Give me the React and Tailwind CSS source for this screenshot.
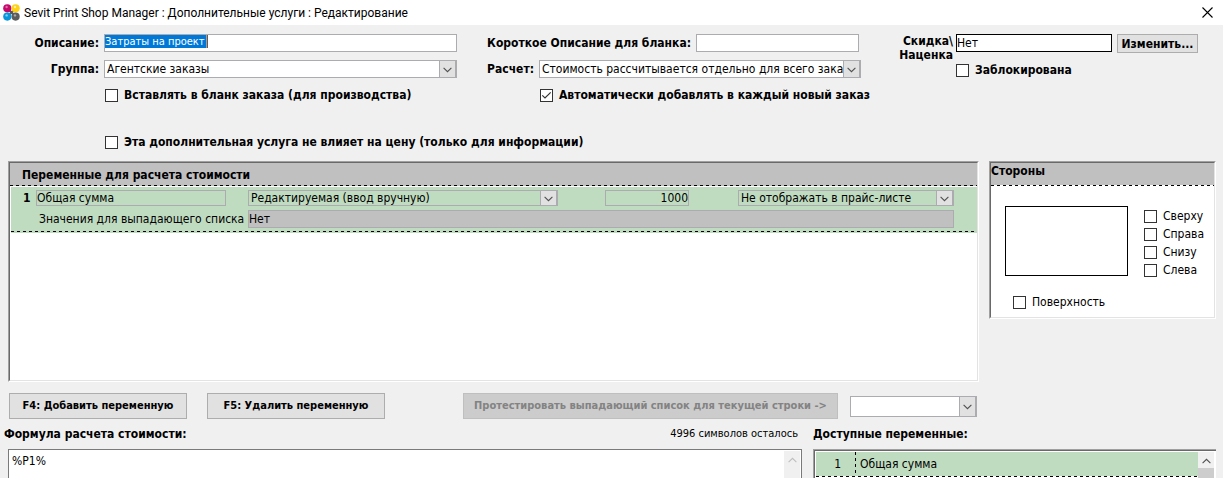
import { useEffect, useRef } from 'react'

const dashed = 'h-px shrink-0 bg-[repeating-linear-gradient(90deg,#000_0_3px,transparent_3px_6px)]'
const sunken = 'border border-t-[#a0a0a0] border-l-[#a0a0a0] border-r-white border-b-white'
const sunkenInner = 'border border-t-[#696969] border-l-[#696969] border-r-[#e3e3e3] border-b-[#e3e3e3]'

function Chevron({ className }) {
  return (
    <svg viewBox="0 0 9 6" className={className} fill="none" stroke="currentColor" strokeWidth="1.1" aria-hidden="true">
      <path d="M0.6 0.8 L4.5 4.7 L8.4 0.8" />
    </svg>
  )
}

function Select({ id, label, value, className = '' }) {
  return (
    <div className={`relative min-w-0 border border-[#ababb0] ${className}`}>
      <select id={id} aria-label={label} className="block h-full w-full appearance-none bg-transparent pl-[2px] pr-[17px] leading-[14px] outline-none">
        <option>{value}</option>
      </select>
      <span className="pointer-events-none absolute inset-y-0 right-0 flex w-[17px] items-center justify-center border border-y-0 border-[#ababb0] bg-[#e1e1e1] pt-[2px] text-[#505050]">
        <Chevron className="h-[6px] w-[9px]" />
      </span>
    </div>
  )
}

function Checkbox({ label, checked = false, bold = true, className = '' }) {
  return (
    <label className={`flex items-center gap-[6px] ${bold ? 'font-bold' : ''} ${className}`}>
      <span className="relative flex size-[13px] shrink-0">
        <input type="checkbox" defaultChecked={checked} className="peer size-[13px] appearance-none border border-[#333] bg-white" />
        <svg viewBox="0 0 13 13" className="pointer-events-none absolute inset-0 hidden peer-checked:block" fill="none" stroke="#333" strokeWidth="1.2" aria-hidden="true">
          <path d="M2.3 6.3 L5 9 L10.7 3.3" />
        </svg>
      </span>
      <span className="whitespace-nowrap">{label}</span>
    </label>
  )
}

function Logo() {
  return (
    <svg viewBox="0 0 17 17" className="size-[17px]" aria-hidden="true">
      <path d="M4 4 L13 13 M13 4 L4 13" stroke="#555" strokeWidth="2" />
      <circle cx="4.3" cy="4.3" r="4.1" fill="#c4086c" />
      <circle cx="12.6" cy="4.3" r="4.1" fill="#fcd116" />
      <circle cx="4.3" cy="12.6" r="4.1" fill="#0a94dc" />
      <circle cx="12.6" cy="12.6" r="4.1" fill="#5c5c5c" />
      <circle cx="3.6" cy="3" r="1.2" fill="#e36ba8" />
      <circle cx="12" cy="3" r="1.2" fill="#fff0a0" />
      <circle cx="3.6" cy="11.4" r="1.2" fill="#7fd0f5" />
      <circle cx="12" cy="11.4" r="1.2" fill="#a8a8a8" />
    </svg>
  )
}

function TitleBar() {
  return (
    <header className="flex h-[25px] shrink-0 items-center justify-between bg-white pl-[3px] pr-[10px]">
      <div className="flex items-center gap-1">
        <Logo />
        <h1 className="font-['Roboto','Noto_Sans',sans-serif] text-[12px] leading-4">
          Sevit Print Shop Manager : Дополнительные услуги : Редактирование
        </h1>
      </div>
      <button type="button" aria-label="Закрыть">
        <svg viewBox="0 0 11 11" className="size-[11px]" stroke="#000" strokeWidth="1.1" aria-hidden="true">
          <path d="M0.5 0.5 L10.5 10.5 M10.5 0.5 L0.5 10.5" />
        </svg>
      </button>
    </header>
  )
}

function Form() {
  const nameRef = useRef(null)

  useEffect(() => {
    nameRef.current.focus()
    nameRef.current.select()
  }, [])

  return (
    <section className="grid h-[136px] shrink-0 grid-cols-[457fr_404fr_362fr] pt-[9px]">
      <div className="min-w-0">
        <div className="flex h-[18px] items-center gap-[5px]">
          <label htmlFor="name" className="w-[99px] shrink-0 text-right font-bold">Описание:</label>
          <div className="relative h-[18px] min-w-0 flex-1 border border-[#ababb0] bg-white">
            <input
              id="name"
              ref={nameRef}
              defaultValue="Затраты на проект "
              className="block h-[13px] w-full text-[11px] leading-[13px] caret-transparent outline-none selection:bg-[#0078d7] selection:text-white"
            />
            <span className="absolute left-[101px] top-0 h-[13px] w-px bg-[#ff8728]" />
          </div>
        </div>
        <div className="mt-2 flex items-center gap-[5px]">
          <label htmlFor="group" className="w-[99px] shrink-0 text-right font-bold">Группа:</label>
          <Select id="group" value="Агентские заказы" className="h-[18px] flex-1 bg-white" />
        </div>
        <Checkbox label="Вставлять в бланк заказа (для производства)" className="ml-[105px] mt-[9px]" />
        <Checkbox label="Эта дополнительная услуга не влияет на цену (только для информации)" className="ml-[105px] mt-[31px]" />
      </div>

      <div className="min-w-0">
        <div className="flex h-[18px] items-center gap-[5px] pr-[2px]">
          <label htmlFor="short" className="w-[234px] shrink-0 text-right font-bold">Короткое Описание для бланка:</label>
          <input id="short" className="h-[18px] min-w-0 flex-1 border border-[#ababb0] bg-white px-[2px] outline-none" />
        </div>
        <div className="mt-2 flex items-center gap-[5px]">
          <label htmlFor="calc" className="w-[77px] shrink-0 text-right font-bold">Расчет:</label>
          <Select id="calc" value="Стоимость рассчитывается отдельно для всего заказа" className="h-[18px] flex-1 bg-white" />
        </div>
        <Checkbox checked label="Автоматически добавлять в каждый новый заказ" className="ml-[83px] mt-[9px]" />
      </div>

      <div className="flex min-w-0 gap-[3px] pr-[25px]">
        <label htmlFor="discount" className="w-[92px] shrink-0 text-right font-bold leading-[14px]">
          Скидка\<br />Наценка
        </label>
        <div className="min-w-0 flex-1">
          <div className="flex gap-[5px]">
            <input id="discount" defaultValue="Нет" className="h-[18px] min-w-0 flex-1 border border-black bg-white outline-none" />
            <button type="button" className="h-[19px] w-[81px] border border-[#adadad] bg-[#e1e1e1] font-bold leading-4">Изменить...</button>
          </div>
          <Checkbox label="Заблокирована" className="mt-[9px]" />
        </div>
      </div>
    </section>
  )
}

function Variables() {
  return (
    <section className={`h-[221px] min-w-0 ${sunken}`}>
      <div className={`h-full bg-white ${sunkenInner}`}>
        <h2 className="h-[22px] bg-[#c0c0c0] pl-3 font-bold leading-[24px]">Переменные для расчета стоимости</h2>
        <div className={`bg-[#c0c0c0] ${dashed}`} />
        <div className="ml-px mt-px bg-[#c0dcc0]">
          <div className="grid grid-cols-[25fr_190fr_22fr_310fr_47fr_84fr_49fr_216fr_23fr] items-center gap-y-1 pb-[3px] pt-[3px]">
            <span className="pl-3 font-bold">1</span>
            <input aria-label="Название" defaultValue="Общая сумма" className="h-4 min-w-0 border border-[#ababb0] bg-transparent outline-none" />
            <Select label="Тип" value="Редактируемая (ввод вручную)" className="col-start-4 h-4" />
            <input aria-label="Значение" defaultValue="1000" className="col-start-6 h-4 min-w-0 border border-[#ababb0] bg-transparent text-right outline-none" />
            <Select label="Прайс-лист" value="Не отображать в прайс-листе" className="col-start-8 h-4" />
            <label htmlFor="values" className="col-span-3 whitespace-nowrap pl-7">Значения для выпадающего списка</label>
            <input id="values" defaultValue="Нет" className="col-span-5 h-[18px] min-w-0 border border-[#ababb0] bg-[#c0c0c0] outline-none" />
          </div>
          <div className={dashed} />
          <div className="h-px" />
        </div>
      </div>
    </section>
  )
}

function Sides() {
  return (
    <section className={`h-[158px] min-w-0 ${sunken}`}>
      <div className={`h-full bg-white ${sunkenInner}`}>
        <h2 className="h-[22px] bg-[#c0c0c0] font-bold leading-4">Стороны</h2>
        <div className={dashed} />
        <div className="flex gap-4 pl-[14px] pt-5">
          <div className="h-[70px] w-[123px] shrink-0 border border-black" />
          <div className="flex flex-col gap-[2px] pt-[2px]">
            <Checkbox bold={false} label="Сверху" />
            <Checkbox bold={false} label="Справа" />
            <Checkbox bold={false} label="Снизу" />
            <Checkbox bold={false} label="Слева" />
          </div>
        </div>
        <Checkbox bold={false} label="Поверхность" className="ml-[22px] mt-4" />
      </div>
    </section>
  )
}

function Actions() {
  return (
    <div className="mt-[11px] flex shrink-0 items-center pl-[9px] pr-[246px]">
      <button type="button" className="h-[26px] w-[178px] shrink-0 border border-[#adadad] bg-[#e1e1e1] text-[11px] font-bold">F4: Добавить переменную</button>
      <button type="button" className="ml-5 h-[26px] w-[178px] shrink-0 border border-[#adadad] bg-[#e1e1e1] text-[11px] font-bold">F5: Удалить переменную</button>
      <button type="button" disabled className="ml-auto h-[26px] w-[375px] shrink-0 whitespace-nowrap border border-[#bfbfbf] bg-[#ccc] text-[11px] font-bold text-[#838383]">
        Протестировать выпадающий список для текущей строки -&gt;
      </button>
      <Select label="Выпадающий список" value="" className="ml-3 h-[21px] w-[127px] shrink-0 bg-white" />
    </div>
  )
}

function Formula() {
  return (
    <section className="flex min-w-0 flex-col">
      <div className="flex h-[30px] items-center justify-between pl-1 pr-1">
        <label htmlFor="formula" className="font-bold">Формула расчета стоимости:</label>
        <span className="text-[11px]">4996 символов осталось</span>
      </div>
      <div className="ml-2 flex min-h-0 flex-1 border border-b-0 border-[#7a7a7a] bg-white p-px pb-0">
        <textarea id="formula" defaultValue="%P1%" className="min-w-0 flex-1 resize-none overflow-hidden pl-[2px] pt-[2px] outline-none" />
        <div className="flex w-4 justify-center bg-[#f0f0f0] pt-[6px] text-[#bfbfbf]">
          <Chevron className="h-[6px] w-[9px] rotate-180" />
        </div>
      </div>
    </section>
  )
}

function Available() {
  return (
    <section className="flex min-w-0 flex-col">
      <h2 className="flex h-[30px] items-center font-bold">Доступные переменные:</h2>
      <div className="flex min-h-0 flex-1 border-l border-t border-[#a0a0a0]">
        <div className="flex min-w-0 flex-1 border-l border-t border-[#696969] bg-white pl-px pr-[2px] pt-px">
          <div className="min-w-0 flex-1">
            <div className="flex h-6 items-center bg-[#c0dcc0]">
              <span className="w-[39px] pr-[14px] text-right">1</span>
              <span className="h-full w-px bg-[repeating-linear-gradient(180deg,#000_0_3px,transparent_3px_6px)]" />
              <span className="pl-1">Общая сумма</span>
            </div>
            <div className={dashed} />
          </div>
          <div className="flex w-4 flex-col items-center bg-[#f0f0f0] pt-[6px] text-[#505050]">
            <Chevron className="h-[6px] w-[9px] shrink-0 rotate-180" />
            <div className="mt-1 w-full flex-1 bg-[#cdcdcd]" />
          </div>
        </div>
      </div>
    </section>
  )
}

export default function App() {
  return (
    <main className="flex h-screen flex-col overflow-hidden bg-[#f0f0f0] font-['DejaVu_Sans_Condensed','DejaVu_Sans',sans-serif] text-[12px] leading-4 text-black">
      <TitleBar />
      <Form />
      <div className="grid shrink-0 grid-cols-[971fr_227fr] gap-x-[10px] pl-2 pr-[7px]">
        <Variables />
        <Sides />
      </div>
      <Actions />
      <div className="grid min-h-0 flex-1 grid-cols-[802fr_403fr] gap-x-[11px] pr-[7px]">
        <Formula />
        <Available />
      </div>
    </main>
  )
}
